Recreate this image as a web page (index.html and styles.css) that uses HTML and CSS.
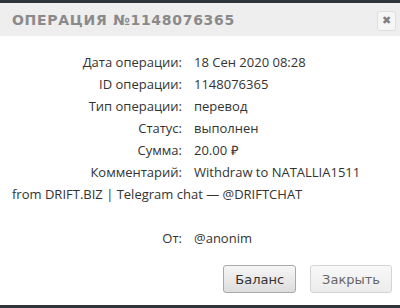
FILE: index.html
```html
<!DOCTYPE html>
<html>
<head>
  <title>Операция</title>
  <link rel="stylesheet" href="styles.css">
</head>
<body>

  <div class="modal">

    <div class="modal-header">
      <h2>Операция №1148076365</h2>
      <button class="close-btn">&#x2716;</button>
    </div>

    <div class="modal-body">
      <div class="info">
        <div class="label">Дата операции:</div>
        <div class="value">18 Сен 2020 08:28</div>

        <div class="label">ID операции:</div>
        <div class="value">1148076365</div>

        <div class="label">Тип операции:</div>
        <div class="value">перевод</div>

        <div class="label">Статус:</div>
        <div class="value">выполнен</div>

        <div class="label">Сумма:</div>
        <div class="value">20.00 &#x20BD;</div>

        <div class="label">Комментарий:</div>
        <div class="value">Withdraw to NATALLIA1511</div>
        <div class="wrap">from DRIFT.BIZ | Telegram chat — @DRIFTCHAT</div>
        <div class="wrap"></div>

        <div class="label">От:</div>
        <div class="value">@anonim</div>
      </div>
    </div>

    <div class="modal-footer">
      <button class="btn">Баланс</button>
      <button class="btn btn-light">Закрыть</button>
    </div>

  </div>

</body>
</html>
```

FILE: styles.css
```css
body {
  margin: 0;
  background: #2f363b;
  font-family: 'Open Sans', sans-serif;
}

.modal {
  height: 302px;
  margin-top: 3px;
  background: #fff;
  display: flex;
  flex-direction: column;
}

.modal-header {
  height: 33px;
  background: #eeeeee;
  display: flex;
  align-items: center;
  justify-content: space-between;
  padding: 0 4px 0 12px;
}

.modal-header h2 {
  margin: 0;
  font-family: 'DejaVu Sans', sans-serif;
  font-size: 14px;
  font-weight: bold;
  letter-spacing: 0.7px;
  text-transform: uppercase;
  color: #8a8a8a;
}

.close-btn {
  width: 19px;
  height: 20px;
  padding: 0;
  margin-top: 2px;
  border: 1px solid #dedede;
  border-radius: 3px;
  background: #f6f6f6;
  color: #808080;
  font-size: 11px;
  line-height: 18px;
  font-family: 'DejaVu Sans', sans-serif;
}

.modal-body {
  padding: 15px 12px 0;
}

.info {
  display: grid;
  grid-template-columns: 170px 1fr;
  column-gap: 12px;
  font-size: 13px;
  font-weight: 500;
  line-height: 22px;
  color: #333;
}

.label {
  text-align: right;
}

.wrap {
  grid-column: 1 / -1;
  min-height: 22px;
}

.modal-footer {
  display: flex;
  justify-content: flex-end;
  gap: 14px;
  padding: 16px 8px 0;
}

.btn {
  height: 28px;
  padding: 0 11px;
  border: 1px solid #a9a9a9;
  border-radius: 3px;
  background: linear-gradient(#f6f6f6, #dddddd);
  font-family: 'DejaVu Sans', Verdana, sans-serif;
  font-size: 13px;
  color: #333;
}

.btn-light {
  border-color: #d4d4d4;
  background: linear-gradient(#f8f8f8, #ececec);
  color: #666;
}
```
